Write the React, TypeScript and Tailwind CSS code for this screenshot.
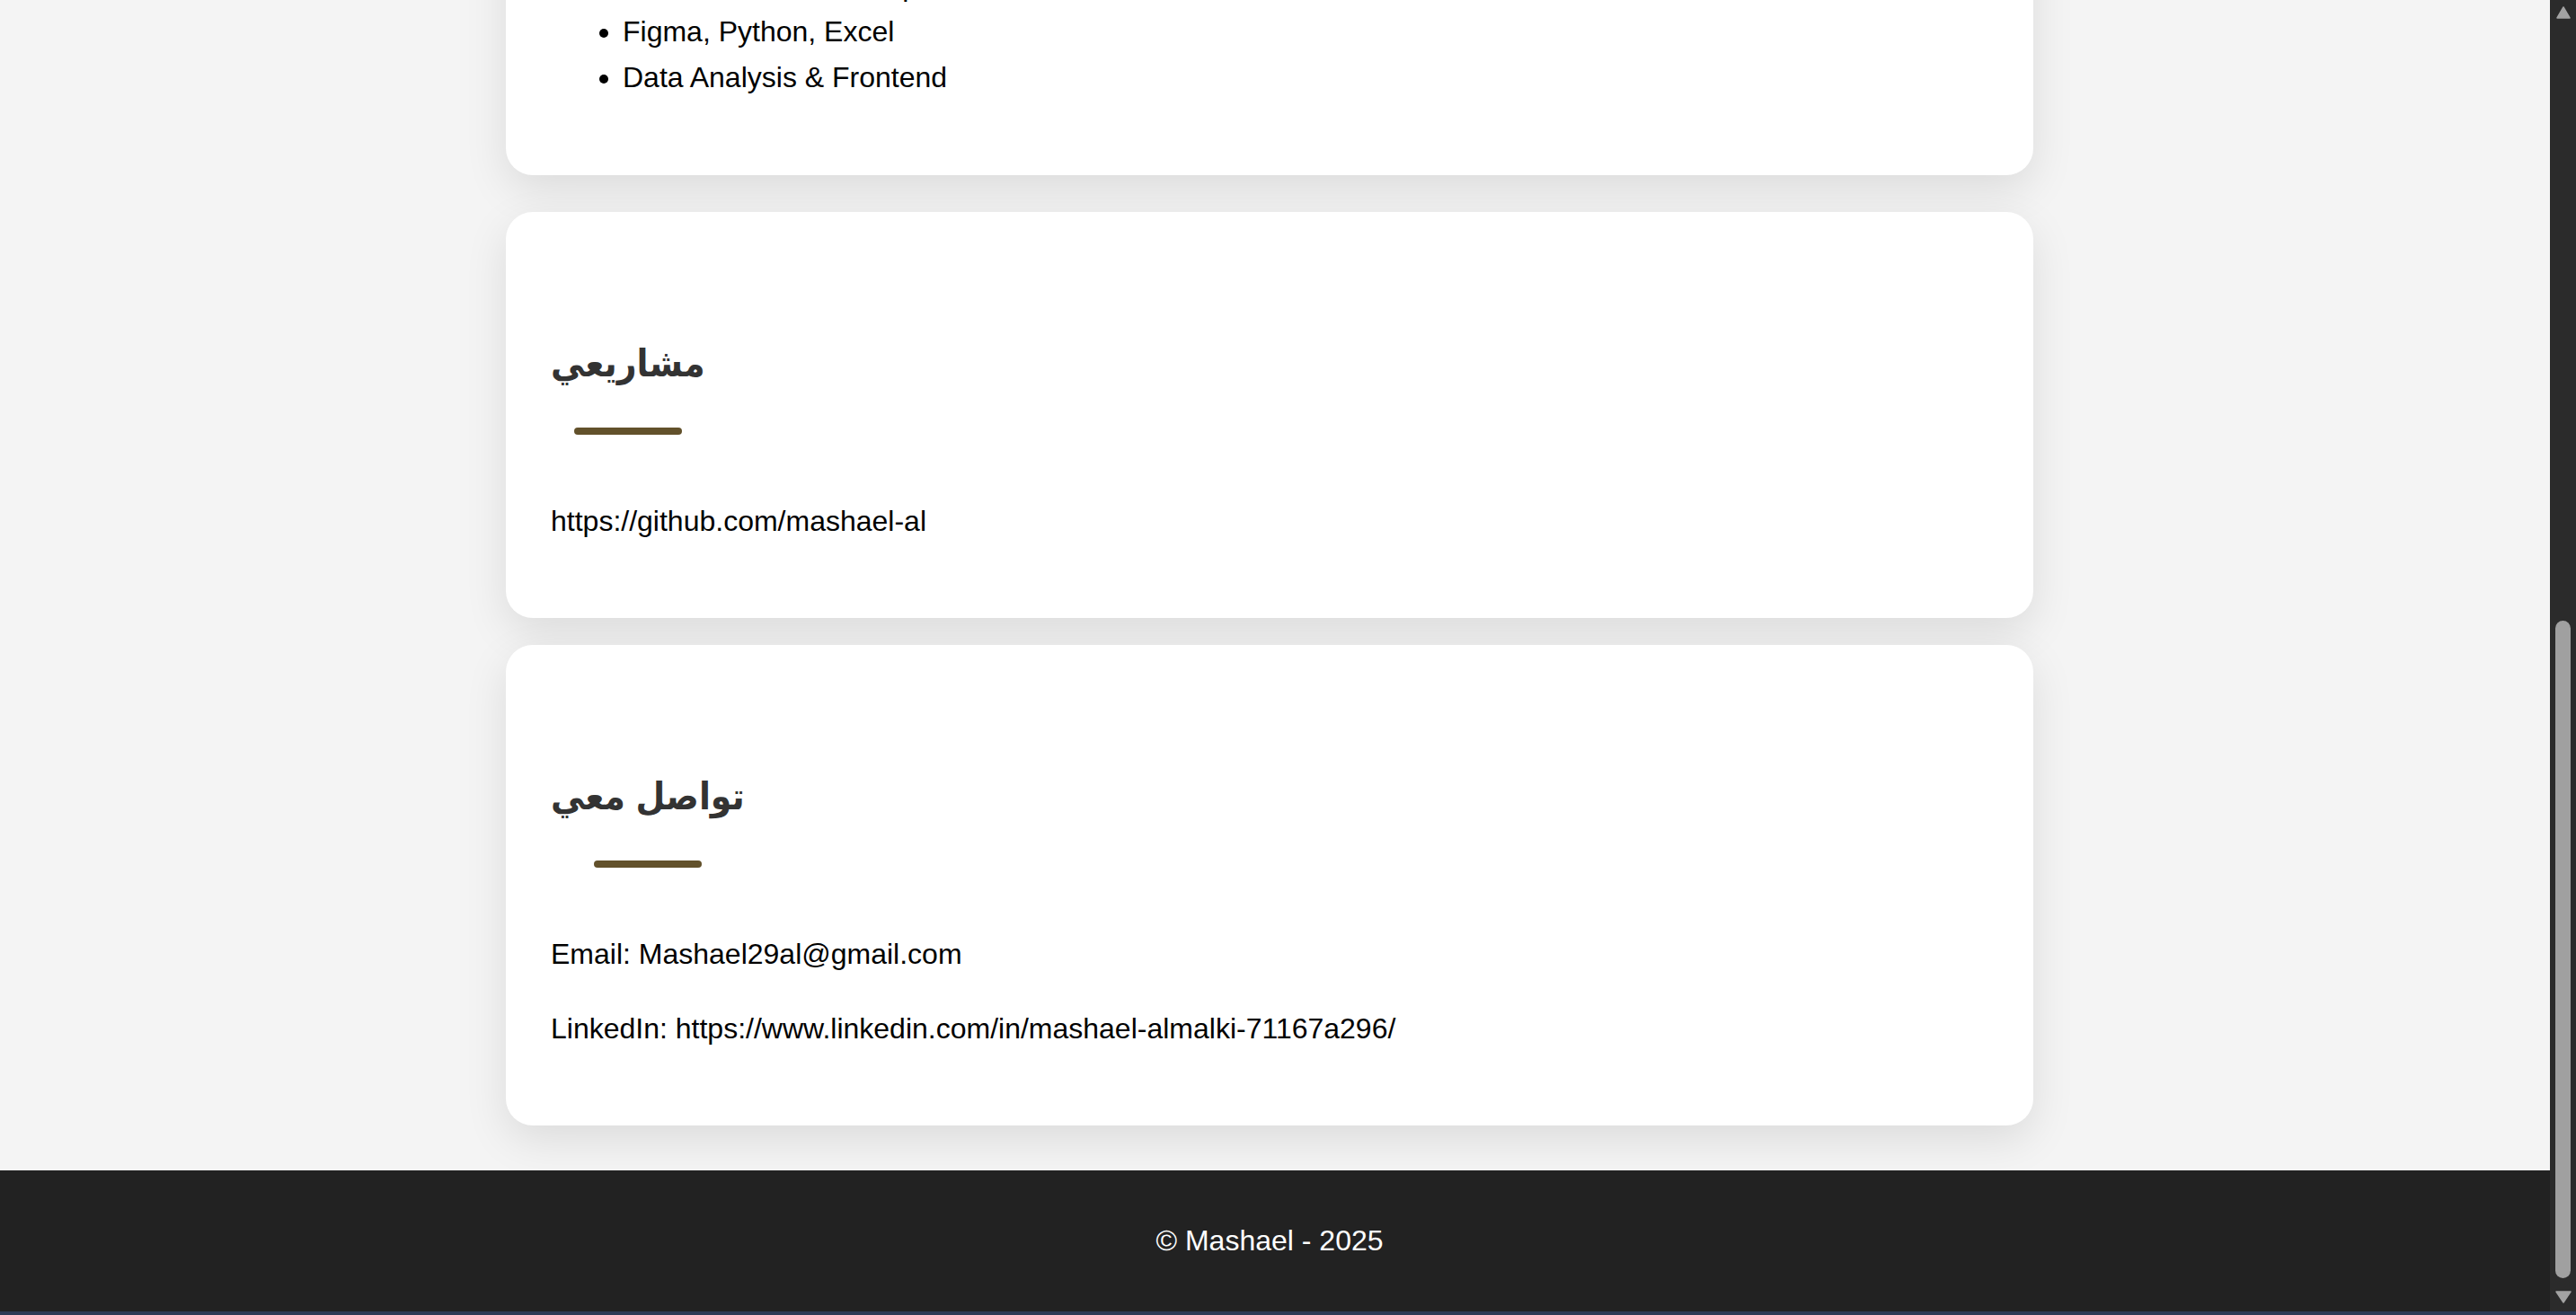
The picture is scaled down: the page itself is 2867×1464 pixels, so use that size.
import React from "react";

function SectionTitle({ children }: { children: React.ReactNode }) {
  return (
    <div className="mt-[90px] mb-[39px] inline-flex flex-col items-center self-start">
      <h2 className="text-[42px] font-bold leading-[58px] font-stretch-condensed text-[#333333]">{children}</h2>
      <div className="mt-[42px] h-[8px] w-[120px] rounded-full bg-[#62512b]" />
    </div>
  );
}

function Card({ children, className = "" }: { children: React.ReactNode; className?: string }) {
  return (
    <section
      className={
        "flex w-[1700px] shrink-0 flex-col rounded-[30px] bg-white px-[50px] pt-[50px] pb-[82px] shadow-[0_16px_48px_rgba(0,0,0,0.1)] " +
        className
      }
    >
      {children}
    </section>
  );
}

export default function App() {
  return (
    <div className="flex h-[1464px] w-[2867px] flex-col overflow-hidden bg-[#f4f4f4] font-['Liberation_Sans','DejaVu_Sans',sans-serif] text-[32px] leading-[1.6] text-black">
      <div className="flex min-h-0 flex-1 flex-row">
        <div className="flex min-w-0 flex-1 flex-col">
          <main className="flex min-h-0 flex-1 flex-col items-center overflow-hidden pr-[12px]">
            <Card className="-mt-[123px]">
              <ul className="mt-[32px] list-disc pl-[80px]">
                <li>HTML, CSS, JavaScript</li>
                <li>Figma, Python, Excel</li>
                <li>Data Analysis &amp; Frontend</li>
              </ul>
            </Card>
            <Card className="mt-[41px]">
              <SectionTitle>مشاريعي</SectionTitle>
              <p className="mt-[32px]">https://github.com/mashael-al</p>
            </Card>
            <Card className="mt-[30px]">
              <SectionTitle>تواصل معي</SectionTitle>
              <p className="mt-[32px]">Email: Mashael29al@gmail.com</p>
              <p className="mt-[32px]">LinkedIn: https://www.linkedin.com/in/mashael-almalki-71167a296/</p>
            </Card>
          </main>
          <footer className="flex h-[157px] shrink-0 items-center justify-center bg-[#222222] pr-[12px] text-white">
            <p>© Mashael - 2025</p>
          </footer>
        </div>
        <aside className="flex w-[29px] shrink-0 flex-col items-center bg-[#2b2b2b]">
          <svg className="mt-[7px]" width="16" height="14" viewBox="0 0 16 14">
            <path d="M8 1 L15 13 L1 13 Z" fill="#a3a3a3" stroke="#a3a3a3" strokeWidth="1.5" strokeLinejoin="round" />
          </svg>
          <div className="flex-1" />
          <div className="h-[732px] w-[17px] rounded-[9px] bg-[#a0a0a0]" />
          <svg className="mt-[14px] mb-[9px]" width="18" height="14" viewBox="0 0 18 14">
            <path d="M1 1 L17 1 L9 13 Z" fill="#a3a3a3" stroke="#a3a3a3" strokeWidth="1.5" strokeLinejoin="round" />
          </svg>
        </aside>
      </div>
      <div className="h-[4px] w-full shrink-0 bg-[#2d3a55]" />
    </div>
  );
}
